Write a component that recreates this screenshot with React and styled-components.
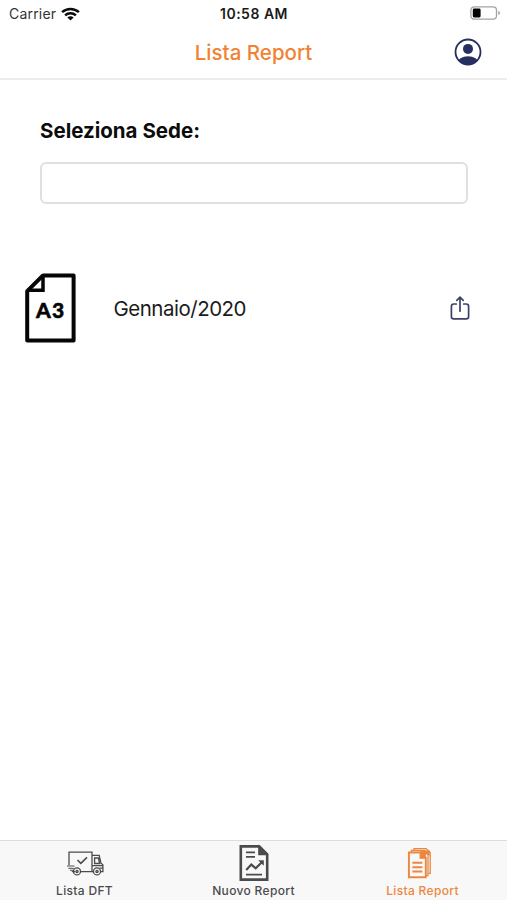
import React from "react";
import styled, { createGlobalStyle } from "styled-components";

const GlobalStyle = createGlobalStyle`
  body {
    margin: 0;
    background: #fff;
    font-family: Inter, "Liberation Sans", sans-serif;
  }
  svg {
    display: block;
  }
`;

const AppStyled = styled.div`
  display: flex;
  flex-direction: column;
  height: 100vh;
  overflow: hidden;
`;

const StatusBar = styled.div`
  display: grid;
  grid-template-columns: 1fr auto 1fr;
  align-items: center;
  height: 27px;
  padding: 0 5px 0 9px;
  box-sizing: border-box;
`;

StatusBar.Carrier = styled.div`
  display: flex;
  align-items: center;
  gap: 5px;
  font-size: 14px;
  letter-spacing: 0.2px;
  color: #333;
`;

StatusBar.Time = styled.div`
  margin-left: -3px;
  font-size: 14px;
  font-weight: 600;
  letter-spacing: 0.5px;
  color: #1a1a1a;
`;

StatusBar.Battery = styled.div`
  justify-self: end;
  margin-top: -1px;
`;

const Header = styled.header`
  display: grid;
  grid-template-columns: 1fr auto 1fr;
  align-items: center;
  height: 53px;
  padding: 0 25px 1px;
  box-sizing: border-box;
  border-bottom: 2px solid #ececec;
`;

Header.Title = styled.h1`
  grid-column: 2;
  margin: 0;
  font-size: 20.5px;
  font-weight: 500;
  letter-spacing: 0.03px;
  color: #f08232;
`;

const IconButton = styled.button`
  justify-self: end;
  padding: 0;
  border: 0;
  background: none;
  cursor: pointer;
`;

const Content = styled.main`
  flex: 1;
`;

const Field = styled.div`
  padding: 38px 39px 0 40px;
  label {
    display: block;
    line-height: 26px;
    font-size: 20.5px;
    font-weight: 650;
    letter-spacing: 0;
    color: #0c0c0c;
  }
  input {
    display: block;
    width: 100%;
    height: 42px;
    margin-top: 18px;
    padding: 0 12px;
    box-sizing: border-box;
    border: 2px solid #e0e0e0;
    border-radius: 6px;
    background: #fff;
    font: inherit;
    outline: none;
  }
`;

const ReportRow = styled.div`
  display: flex;
  align-items: center;
  height: 72px;
  margin-top: 68px;
  padding: 0 37px 0 24px;
`;

ReportRow.Name = styled.div`
  flex: 1;
  margin-left: 35.5px;
  padding-top: 1px;
  font-size: 20.5px;
  letter-spacing: -0.5px;
  color: #1c1c1c;
`;

const TabBar = styled.nav`
  display: grid;
  grid-template-columns: repeat(3, 1fr);
  height: 60px;
  box-sizing: border-box;
  border-top: 1px solid #dcdcdc;
  background: #f8f8f8;
`;

const Tab = styled.div`
  display: flex;
  flex-direction: column;
  align-items: center;
  color: ${(props) => (props.$active ? "#ec8740" : "#4b4b4d")};
  svg {
    height: 42px;
  }
  span {
    line-height: 16px;
    font-size: 12px;
    font-weight: 500;
    letter-spacing: 0.33px;
  }
`;

const WifiIcon = () => (
  <svg width="19" height="14" viewBox="0 0 19 14" fill="none" stroke="#0b0b0b" strokeWidth="2.5">
    <path d="M1.1 5.1C5.8.8 13.2.8 17.9 5.1" />
    <path d="M4.1 8.3c3-2.8 7.8-2.8 10.8 0" />
    <path d="M9.5 13.6 6.4 10.5c1.7-1.6 4.5-1.6 6.2 0z" fill="#0b0b0b" stroke="none" />
  </svg>
);

const BatteryIcon = () => (
  <svg width="32" height="14" viewBox="0 0 32 14">
    <rect x=".9" y=".8" width="25.6" height="12.4" rx="3.4" fill="none" stroke="#a3a3a3" strokeWidth="1.3" />
    <rect x="2.8" y="2.6" width="7.8" height="8.8" rx="1.4" fill="#000" />
    <path d="M28.3 4.8c2.2.8 2.2 3.6 0 4.4z" fill="#a3a3a3" />
  </svg>
);

const ProfileIcon = () => (
  <svg width="28" height="28" viewBox="0 0 28 28">
    <defs>
      <clipPath id="profile-clip">
        <circle cx="14" cy="14" r="12.5" />
      </clipPath>
    </defs>
    <circle cx="14" cy="14" r="12.5" fill="none" stroke="#253060" strokeWidth="1.8" />
    <circle cx="14" cy="10.9" r="5" fill="#253060" />
    <ellipse cx="14" cy="24.8" rx="10.6" ry="6.6" fill="#253060" clipPath="url(#profile-clip)" />
  </svg>
);

const A3Icon = () => (
  <svg width="54" height="72" viewBox="0 0 54 72">
    <path
      d="M19 3.4h30.6v65.2H3.2V19.2z"
      fill="none"
      stroke="#050505"
      strokeWidth="4"
      strokeLinejoin="round"
    />
    <path d="M19 4v14.2H4" fill="none" stroke="#050505" strokeWidth="3.5" />
    <text
      x="12"
      y="46.2"
      fontFamily="Lato, sans-serif"
      fontWeight="900"
      fontSize="21"
      letterSpacing="1.2"
      fill="#050505"
      stroke="#050505"
      strokeWidth=".5"
    >
      A3
    </text>
  </svg>
);

const ShareIcon = () => (
  <svg
    width="20"
    height="26"
    viewBox="0 0 20 26"
    fill="none"
    stroke="#3c4068"
    strokeWidth="1.7"
    strokeLinecap="round"
    strokeLinejoin="round"
  >
    <path d="M6.3 9H3.8a2.4 2.4 0 0 0-2.4 2.4v10.1a2.4 2.4 0 0 0 2.4 2.4h12.4a2.4 2.4 0 0 0 2.4-2.4V11.4A2.4 2.4 0 0 0 16.2 9h-2.5" />
    <path d="M10 16.2V2.6M6.8 5.4 10 2.2l3.2 3.2" />
  </svg>
);

const TruckIcon = () => (
  <svg width="38" height="42" viewBox="0 0 38 42" fill="none" stroke="currentColor" strokeWidth="1.3">
    <path d="M3 24V11.2h23v19.4H14.5M9 30.6H5.8" />
    <path d="M26 14.4h7.2l1.8 7.8 1.9 1.6v6.8h-2.8M26 30.6h2M28.6 17h3.8l1.2 5.5h-5zM26 24.6h10.5M33.5 27.2h3" />
    <path d="m11.5 19 3.3 3.4 6.2-6" strokeWidth="1.6" />
    <path d="M1 25h7.6M2.3 27.3h5.5M4 29.3h3" strokeWidth="1" />
    <circle cx="11" cy="30.4" r="3.5" />
    <circle cx="31" cy="30.4" r="3.5" />
    <circle cx="11" cy="30.4" r="1.1" />
    <circle cx="31" cy="30.4" r="1.1" />
  </svg>
);

const NewReportIcon = () => (
  <svg width="30" height="42" viewBox="0 0 30 42" fill="none" stroke="currentColor" strokeWidth="2.6">
    <path d="M1.8 5.4h18.4l8 8v25.2H1.8z" />
    <path d="M19.8 5v8.6h8.4z" fill="currentColor" strokeWidth="1.2" />
    <path d="M7 11.3h9M7 15.8h9M7 33.6h16" strokeWidth="1.8" />
    <path d="m7.2 29 5.1-5.4 4.4 3.7 6.1-6" strokeWidth="2.2" />
    <path d="M19.2 19.2h5.6v5.6z" fill="currentColor" stroke="none" />
  </svg>
);

const ReportListIcon = () => (
  <svg width="32" height="42" viewBox="0 0 32 42" fill="none" stroke="currentColor" strokeWidth="1.3">
    <path d="M7.4 11.5h6.4l5 5.2v19.6H1.9V11.5z" strokeWidth="1.9" />
    <path d="M13.2 11.5v5.7h5.6" fill="currentColor" />
    <path d="M5.4 21.8h10M5.4 26.2h10M5.4 30.6h10" strokeWidth="2" />
    <path d="M4.4 11V9.5h13.4l3.2 3.2v21.9h-2" />
    <path d="M7 9.2V7.6h12.2l4 4v20.8h-2" />
    <path d="M12.5 9.5h10.2v5.2l-3.5-1.4-1 3z" fill="currentColor" stroke="none" />
  </svg>
);

function App() {
  return (
    <AppStyled>
      <GlobalStyle />
      <StatusBar>
        <StatusBar.Carrier>
          Carrier
          <WifiIcon />
        </StatusBar.Carrier>
        <StatusBar.Time>10:58 AM</StatusBar.Time>
        <StatusBar.Battery>
          <BatteryIcon />
        </StatusBar.Battery>
      </StatusBar>
      <Header>
        <Header.Title>Lista Report</Header.Title>
        <IconButton type="button" aria-label="Profilo">
          <ProfileIcon />
        </IconButton>
      </Header>
      <Content>
        <Field>
          <label htmlFor="sede">Seleziona Sede:</label>
          <input type="text" id="sede" name="sede" />
        </Field>
        <ReportRow>
          <A3Icon />
          <ReportRow.Name>Gennaio/2020</ReportRow.Name>
          <IconButton type="button" aria-label="Condividi">
            <ShareIcon />
          </IconButton>
        </ReportRow>
      </Content>
      <TabBar>
        <Tab>
          <TruckIcon />
          <span>Lista DFT</span>
        </Tab>
        <Tab>
          <NewReportIcon />
          <span>Nuovo Report</span>
        </Tab>
        <Tab $active>
          <ReportListIcon />
          <span>Lista Report</span>
        </Tab>
      </TabBar>
    </AppStyled>
  );
}

export default App;
